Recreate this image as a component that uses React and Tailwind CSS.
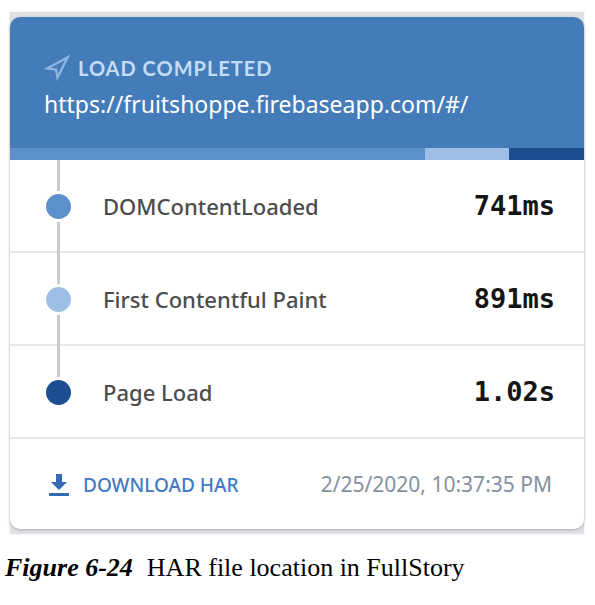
const timings = [
  { label: 'DOMContentLoaded', value: '741ms', dot: 'bg-[#5c90ca]', above: 'bg-[#c9c9c9]', below: 'bg-[#c9c9c9]' },
  { label: 'First Contentful Paint', value: '891ms', dot: 'bg-[#9dbfe5]', above: 'bg-[#c9c9c9]', below: 'bg-[#c9c9c9]' },
  { label: 'Page Load', value: '1.02s', dot: 'bg-[#1d4e91]', above: 'bg-[#c9c9c9]', below: 'bg-transparent' },
];

function SendIcon() {
  return (
    <svg aria-hidden="true" className="h-[26px] w-[26px] shrink-0" viewBox="0 0 26 26" fill="none">
      <path d="M23.5 2.5 L3 13.5 L12 14.5 L13.5 22.5 Z" stroke="#8db4e2" strokeWidth="2.4" strokeLinejoin="miter" />
    </svg>
  );
}

function DownloadIcon() {
  return (
    <svg aria-hidden="true" className="h-[22px] w-5 shrink-0" viewBox="0 0 20 22" fill="#356ab5">
      <path d="M7 0h6v8h5l-8 8-8-8h5z" />
      <path d="M0 19h20v3H0z" />
    </svg>
  );
}

function Timing({ label, value, dot, above, below }) {
  return (
    <div className="flex h-[93px] items-center pr-[29px] pl-9 shadow-[inset_0_-2px_0_#e6e7ea]">
      <div aria-hidden="true" className="flex w-[25px] flex-col items-center self-stretch">
        <span className={`w-[3px] flex-1 ${above}`} />
        <span className={`my-[3px] size-[25px] rounded-full ${dot}`} />
        <span className={`w-[3px] flex-1 ${below}`} />
      </div>
      <dt className="ml-8 flex-1 text-[22px] font-medium text-[#4c4c4c]">{label}</dt>
      <dd className="font-['DejaVu_Sans_Mono',monospace] text-[27px] font-bold text-[#151515]">{value}</dd>
    </div>
  );
}

export default function App() {
  return (
    <figure className="bg-white pt-3 pr-[11px] pl-[10px] font-['Noto_Sans',sans-serif]">
      <div className="bg-[#dfe1e5] py-[5px] shadow-[0_0_2px_#e6e6e6]">
        <section className="overflow-hidden rounded-[10px] bg-white shadow-[0_1px_3px_#a9aeb6]">
          <header className="bg-[#447bb9]">
            <div className="flex h-[131px] flex-col justify-end px-[34px] pb-6">
              <div className="flex items-center gap-2">
                <SendIcon />
                <h1 className="font-[Lato,sans-serif] text-xl leading-8 font-bold tracking-wider text-[#c5dcf6]">LOAD COMPLETED</h1>
              </div>
              <a href="https://fruitshoppe.firebaseapp.com/#/" className="text-[23px] leading-10 text-white">
                https://fruitshoppe.firebaseapp.com/#/
              </a>
            </div>
            <div aria-hidden="true" className="flex h-3">
              <span className="flex-[415] bg-[#5c90ca]" />
              <span className="flex-[84] bg-[#9dbfe5]" />
              <span className="flex-[75] bg-[#1d4e91]" />
            </div>
          </header>
          <dl>
            {timings.map((timing) => (
              <Timing key={timing.label} {...timing} />
            ))}
          </dl>
          <footer className="flex h-[90px] items-center justify-between pt-[2px] pr-8 pl-[39px]">
            <button type="button" className="flex items-center gap-[14px] text-[19px] font-medium text-[#4179c4]">
              <DownloadIcon />
              DOWNLOAD HAR
            </button>
            <time dateTime="2020-02-25T22:37:35" className="text-[21px] text-[#8491a0]">2/25/2020, 10:37:35 PM</time>
          </footer>
        </section>
      </div>
      <figcaption className="-ml-[5px] pt-4 font-['Liberation_Serif',serif] text-[26px] leading-9 text-black">
        <b className="mr-3.5 italic">Figure 6-24</b>
        HAR file location in FullStory
      </figcaption>
    </figure>
  );
}
